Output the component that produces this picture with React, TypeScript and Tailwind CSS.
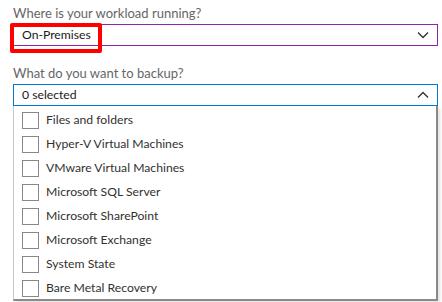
import React from "react";

const items = [
  "Files and folders",
  "Hyper-V Virtual Machines",
  "VMware Virtual Machines",
  "Microsoft SQL Server",
  "Microsoft SharePoint",
  "Microsoft Exchange",
  "System State",
  "Bare Metal Recovery",
];

function Chevron({ up }: { up?: boolean }) {
  return (
    <svg width="12" height="8" viewBox="0 0 12 8" className="shrink-0">
      <path
        d={up ? "M1 6.5 L6 1.5 L11 6.5" : "M1 1.5 L6 6.5 L11 1.5"}
        fill="none"
        stroke="#323130"
        strokeWidth="1.3"
      />
    </svg>
  );
}

export default function App() {
  return (
    <div
      className="w-[442px] h-[302px] bg-white overflow-hidden pl-[13px] pr-[4px] pt-[4px]"
      style={{ fontFamily: "Lato, 'Noto Sans', sans-serif" }}
    >
      <div className="text-[13px] leading-[18px] text-[#666666]">Where is your workload running?</div>
      <div className="relative mt-[2px] h-[22px] border border-[#8e24aa] flex items-center justify-between pl-[8px] pr-[8px]">
        <span className="text-[12.2px] text-[#1a1a1a]">On-Premises</span>
        <Chevron />
        <div className="absolute left-[-4px] top-[-2px] w-[92px] h-[30px] border-[4px] border-[#ff0000] rounded-[2px]" />
      </div>
      <div className="mt-[18px] text-[13px] leading-[18px] text-[#666666]">What do you want to backup?</div>
      <div className="mt-[2px] h-[22px] border border-[#0078d4] flex items-center justify-between pl-[8px] pr-[8px]">
        <span className="text-[12.2px] text-[#1a1a1a]">0 selected</span>
        <Chevron up />
      </div>
      <div className="h-[195px] border-l border-l-[#c8c8c8] border-r-2 border-r-[#8a8a8a] border-b-2 border-b-[#8a8a8a] shadow-[2px_2px_3px_rgba(0,0,0,0.12)] pt-[2px]">
        {items.map((t) => (
          <div key={t} className="h-[24px] flex items-center pl-[8px]">
            <div className="w-[17px] h-[17px] border border-[#8a8886] bg-white mr-[7px]" />
            <span className="text-[12.2px] text-[#323130]">{t}</span>
          </div>
        ))}
      </div>
    </div>
  );
}
